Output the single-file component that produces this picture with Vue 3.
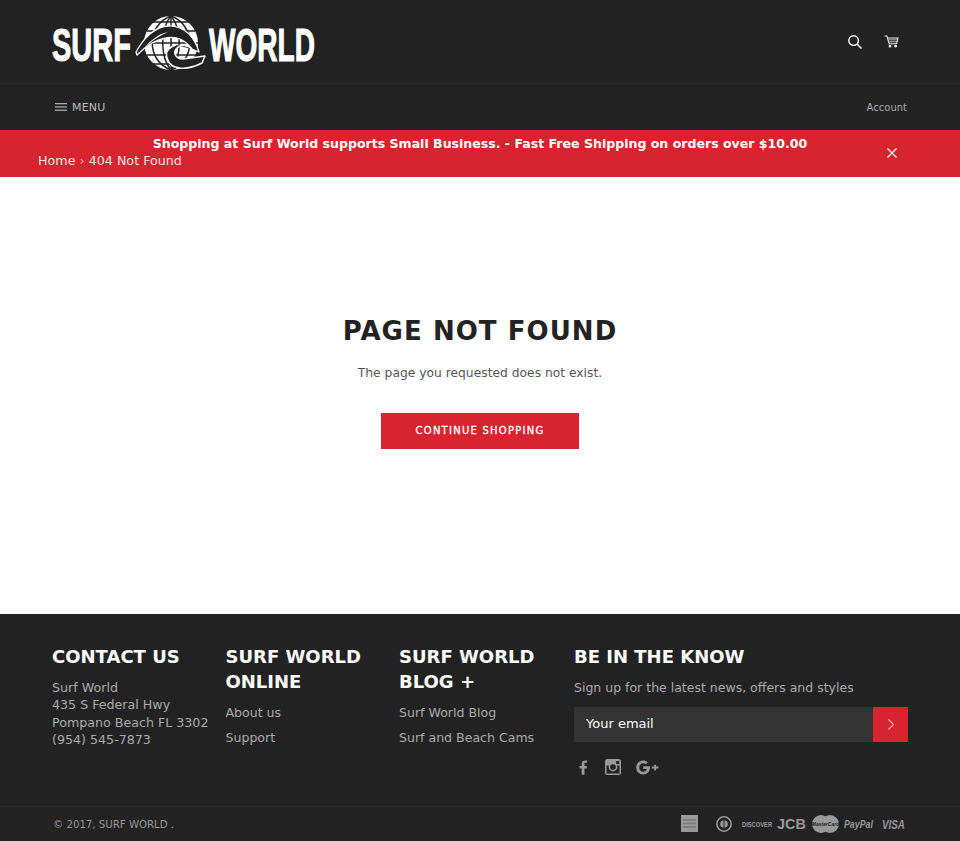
<script setup>
const columns = [
  { title: ['SURF WORLD', 'ONLINE'], links: ['About us', 'Support'] },
  { title: ['SURF WORLD', 'BLOG +'], links: ['Surf World Blog', 'Surf and Beach Cams'] },
];
// grid of the globe in the logo
const globeLines = [
  'M171 15 V69',
  'M171 15 C160 28 160 56 171 69',
  'M171 15 C182 28 182 56 171 69',
  'M171 15 C146 24 146 60 171 69',
  'M171 15 C196 24 196 60 171 69',
  'M144 42 H198',
  'M147 30 H195',
  'M151 21 H191',
  'M147 54 H195',
  'M151 63 H191',
];
</script>

<template>
  <div class="page">
    <header class="site-header">
      <a class="logo" href="#" aria-label="Surf World">
        <svg width="268" height="60" viewBox="50 11 268 60">
          <text transform="translate(52 59.5) scale(0.63 1)" class="logo-text">SURF</text>
          <text transform="translate(209 59.5) scale(0.61 1)" class="logo-text">WORLD</text>
          <circle cx="171" cy="42" r="27" fill="#fff" />
          <g fill="none" stroke="#222" stroke-width="1.5">
            <path v-for="d in globeLines" :key="d" :d="d" />
          </g>
          <path d="M136 51 C140 44 145 37 150 33 C156 28 162 25 168 25 C175 24 184 28 189 33 C194 38 197 44 199 51 L192 48 C189 44 185 40 180 38 C175 36 170 36 166 37 C160 38 156 40 152 42 C147 45 141 50 137 54 Z" fill="#222" stroke="#fff" stroke-width="1.3" stroke-linejoin="round" />
          <path d="M144 47 C150 40 158 33 168 31 C160 35 154 38 149 43 Z" fill="#fff" />
          <path d="M192 48 C187 44 182 44 180 45 C176 47 174 50 175 53 C176 56 179 58 183 58 L205 55 L202 62 C196 65 187 68 180 67 C174 66 169 63 168 59 C166 55 166 52 168 49 C170 46 173 45 176 44" fill="#222" stroke="#fff" stroke-width="1.4" stroke-linejoin="round" />
        </svg>
      </a>
      <div class="header-icons">
        <svg width="14" height="14" viewBox="0 0 14 14" fill="none" stroke="#fff" stroke-width="1.4">
          <circle cx="5.6" cy="5.6" r="4.8" />
          <path d="M9 9 L13.5 13.5" />
        </svg>
        <svg width="15" height="13" viewBox="0 0 16 14" fill="none" stroke="#eee" stroke-width="1.1">
          <path d="M0.5 1 H3 L5.4 9.5 H13.5 L15 3.2 H3.8" />
          <path d="M4.6 5.2 H14.4 M5 7.3 H14" stroke-width="0.8" />
          <circle cx="6.4" cy="12" r="1" fill="#eee" />
          <circle cx="12.4" cy="12" r="1" fill="#eee" />
        </svg>
      </div>
    </header>

    <nav class="site-nav">
      <a class="menu" href="#">
        <svg width="12" height="8" viewBox="0 0 12 8" fill="#aaa">
          <rect width="12" height="1.3" />
          <rect y="3.3" width="12" height="1.3" />
          <rect y="6.6" width="12" height="1.3" />
        </svg>
        MENU
      </a>
      <a class="account" href="#">Account</a>
    </nav>

    <div class="announcement">
      <p class="announce-text">Shopping at Surf World supports Small Business. - Fast Free Shipping on orders over $10.00</p>
      <p class="breadcrumb">Home <span class="sep">›</span> 404 Not Found</p>
      <svg class="close" width="10" height="10" viewBox="0 0 10 10" stroke="#fff" stroke-width="1.2">
        <path d="M0.5 0.5 L9.5 9.5 M9.5 0.5 L0.5 9.5" />
      </svg>
    </div>

    <main class="not-found">
      <h1>PAGE NOT FOUND</h1>
      <p>The page you requested does not exist.</p>
      <a class="btn" href="#">CONTINUE SHOPPING</a>
    </main>

    <footer class="site-footer">
      <div class="footer-grid">
        <section>
          <h4>CONTACT US</h4>
          <p class="address">Surf World<br />435 S Federal Hwy<br />Pompano Beach FL 3302<br />(954) 545-7873</p>
        </section>
        <section v-for="col in columns" :key="col.title[1]">
          <h4>{{ col.title[0] }}<br />{{ col.title[1] }}</h4>
          <ul>
            <li v-for="link in col.links" :key="link">{{ link }}</li>
          </ul>
        </section>
        <section>
          <h4>BE IN THE KNOW</h4>
          <p class="signup">Sign up for the latest news, offers and styles</p>
          <form class="news-form" @submit.prevent>
            <input type="email" placeholder="Your email" />
            <button type="submit" aria-label="Subscribe">
              <svg width="6" height="11" viewBox="0 0 6 11" fill="none" stroke="#f4b6bc" stroke-width="1.1">
                <path d="M0.5 0.5 L5.5 5.5 L0.5 10.5" />
              </svg>
            </button>
          </form>
          <div class="social">
            <svg width="9" height="15" viewBox="0 0 10 16" fill="#999">
              <path d="M3 16 V9 H0.6 V6.2 H3 V4 C3 1.5 4.5 0.2 6.7 0.2 C7.8 0.2 8.7 0.3 9 0.3 V2.8 H7.5 C6.3 2.8 6.1 3.4 6.1 4.2 V6.2 H8.9 L8.5 9 H6.1 V16 Z" />
            </svg>
            <svg width="16" height="16" viewBox="0 0 16 16" fill="none">
              <rect width="16" height="16" rx="2.5" fill="#999" />
              <rect x="1.5" y="6.5" width="13" height="8" fill="#222" />
              <circle cx="8" cy="8" r="4.4" fill="#999" />
              <circle cx="8" cy="8" r="2.8" fill="#222" />
              <rect x="11.2" y="2" width="3" height="3" fill="#222" />
            </svg>
            <svg class="gplus" width="23" height="15" viewBox="0 0 24 15" fill="#999">
              <path d="M7.5 6.2 V9 H11.3 C11 10.7 9.6 11.9 7.5 11.9 C5.2 11.9 3.3 10 3.3 7.5 C3.3 5 5.2 3.1 7.5 3.1 C8.6 3.1 9.5 3.5 10.2 4.2 L12.3 2.1 C11 0.9 9.4 0.2 7.5 0.2 C3.4 0.2 0.2 3.4 0.2 7.5 C0.2 11.6 3.4 14.8 7.5 14.8 C11.8 14.8 14.6 11.8 14.6 7.6 C14.6 7.1 14.6 6.6 14.5 6.2 Z" />
              <path d="M19 4.5 H21 V6.5 H23.5 V8.5 H21 V10.5 H19 V8.5 H16.5 V6.5 H19 Z" />
            </svg>
          </div>
        </section>
      </div>

      <div class="footer-bottom">
        <span class="copyright">© 2017, SURF WORLD .</span>
        <svg class="payments" width="224" height="18" viewBox="681 816 224 18">
          <rect x="681" y="816" width="17" height="17" fill="#999" />
          <path d="M683 821 H696 M683 824.5 H696 M683 828 H696" stroke="#777" stroke-width="1.4" />
          <circle cx="724" cy="825" r="7.2" fill="none" stroke="#999" stroke-width="1.5" />
          <circle cx="724" cy="825" r="3.8" fill="#999" />
          <rect x="723.5" y="820" width="1" height="10" fill="#222" />
          <text transform="translate(742 828) scale(0.72 1)" class="pay pay-small">DISCOVER</text>
          <text transform="translate(777 830) scale(1.03 1)" class="pay pay-jcb">JCB</text>
          <circle cx="821" cy="825" r="9" fill="#999" />
          <circle cx="830" cy="825" r="9" fill="#999" />
          <text x="825.5" y="827" text-anchor="middle" class="pay pay-mc">MasterCard</text>
          <text transform="translate(844 829) scale(0.88 1)" class="pay pay-italic">PayPal</text>
          <text transform="translate(882 830) scale(0.82 1)" class="pay pay-visa">VISA</text>
        </svg>
      </div>
    </footer>
  </div>
</template>

<style>
html, body {
  margin: 0;
  background: #fff;
}
</style>

<style scoped>
.page {
  font-family: "DejaVu Sans", sans-serif;
  color: #222;
  min-height: 841px;
  display: flex;
  flex-direction: column;
}
a {
  text-decoration: none;
  color: inherit;
}

.site-header {
  background: #222;
  height: 83px;
  padding: 0 52px 0 50px;
  display: flex;
  align-items: center;
  justify-content: space-between;
  box-sizing: border-box;
}
.logo {
  display: block;
  height: 60px;
}
.logo-text {
  font-family: "Liberation Sans", sans-serif;
  font-weight: 700;
  font-size: 46px;
  fill: #fff;
  stroke: #fff;
  stroke-width: 1.1px;
}
.header-icons {
  display: flex;
  align-items: center;
  gap: 22px;
  margin-right: 9px;
}

.site-nav {
  background: #222;
  border-top: 1px solid #2b2b2b;
  height: 47px;
  box-sizing: border-box;
  padding: 0 53px 0 55px;
  display: flex;
  align-items: center;
  justify-content: space-between;
}
.menu {
  display: flex;
  align-items: center;
  gap: 5px;
  font-size: 11px;
  letter-spacing: 0.2px;
  color: #bbb;
}
.account {
  font-size: 10px;
  color: #aaa;
}

.announcement {
  position: relative;
  background: #d9232e;
  height: 47px;
  color: #fff;
  box-sizing: border-box;
  padding-top: 5px;
}
.announce-text {
  margin: 0;
  text-align: center;
  font-size: 12.55px;
  font-weight: 700;
  line-height: 17px;
}
.breadcrumb {
  margin: 0 0 0 38px;
  font-size: 12.7px;
  line-height: 17px;
  color: #f8e4e5;
}
.sep {
  color: #f0b5b9;
}
.close {
  position: absolute;
  right: 63px;
  top: 18px;
}

.not-found {
  height: 437px;
  box-sizing: border-box;
  padding-top: 138px;
  text-align: center;
}
.not-found h1 {
  margin: 0;
  font-size: 26px;
  line-height: 32px;
  font-weight: 700;
  letter-spacing: 1.05px;
  color: #222;
}
.not-found p {
  margin: 17px 0 0;
  font-size: 12.3px;
  line-height: 19px;
  color: #555;
}
.btn {
  display: block;
  margin: 30px auto 0;
  width: 198px;
  height: 36px;
  line-height: 36px;
  background: #d9232e;
  color: #fff;
  font-size: 10px;
  letter-spacing: 1.25px;
  -webkit-text-stroke: 0.3px #fff;
}

.site-footer {
  background: #222;
  color: #aaa;
  height: 227px;
  box-sizing: border-box;
}
.footer-grid {
  display: grid;
  grid-template-columns: 173.5px 173.5px 175px 1fr;
  padding: 30px 52px 0;
  height: 193px;
  box-sizing: border-box;
  border-bottom: 1px solid #2b2b2b;
}
h4 {
  margin: 0 0 10px;
  color: #fff;
  font-size: 18px;
  line-height: 25px;
  font-weight: 700;
}
.address {
  margin: 0;
  font-size: 12.65px;
  line-height: 17.35px;
}
ul {
  list-style: none;
  margin: 0;
  padding: 0;
}
li {
  font-size: 12.55px;
  line-height: 17px;
  margin-bottom: 8px;
}
.signup {
  margin: 0 0 11px;
  font-size: 12.5px;
  line-height: 17px;
}
.news-form {
  display: flex;
  height: 35px;
}
input {
  flex: 1;
  min-width: 0;
  border: 0;
  padding: 0 12px 3px;
  background: #333;
  color: #fff;
  font-family: inherit;
  font-size: 13px;
  outline: none;
}
input::placeholder {
  color: #fff;
  opacity: 1;
}
button {
  width: 35px;
  border: 0;
  padding: 0;
  background: #d9232e;
  display: flex;
  align-items: center;
  justify-content: center;
}
.social {
  display: flex;
  align-items: center;
  gap: 17px;
  margin: 17px 0 0 5px;
}
.gplus {
  margin-left: -2px;
}

.footer-bottom {
  display: flex;
  align-items: center;
  justify-content: space-between;
  padding: 8px 55px 0 53px;
}
.copyright {
  font-size: 10.2px;
  color: #999;
}
.pay {
  fill: #999;
  font-family: "Liberation Sans", sans-serif;
  font-weight: 700;
}
.pay-small { font-size: 8px; }
.pay-jcb { font-size: 14px; }
.pay-mc { font-size: 5px; fill: #222; font-style: italic; }
.pay-italic { font-size: 10px; font-style: italic; }
.pay-visa { font-size: 12px; font-style: italic; }
</style>
